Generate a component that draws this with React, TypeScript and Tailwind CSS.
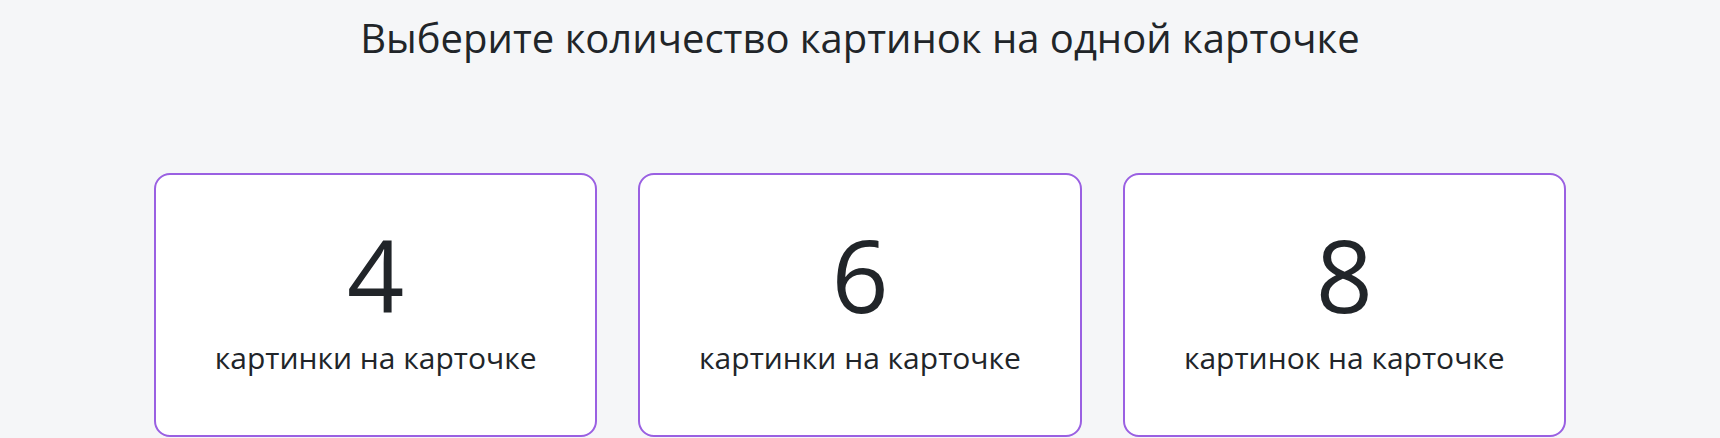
const options = [
  { count: 4, label: "картинки на карточке" },
  { count: 6, label: "картинки на карточке" },
  { count: 8, label: "картинок на карточке" },
];

export default function App() {
  return (
    <div
      className="min-h-[438px] bg-[#f5f6f8] text-[#212529]"
      style={{ fontFamily: '"Open Sans", sans-serif' }}
    >
      <h1 className="pt-[14px] text-center text-[40px] leading-[48px]">
        Выберите количество картинок на одной карточке
      </h1>

      <div className="mx-auto mt-[111px] grid w-[1412px] grid-cols-3 gap-[41px]">
        {options.map((o) => (
          <button
            key={o.count}
            className="flex h-[264px] flex-col items-center rounded-2xl border-2 border-[#9a60e2] bg-white pt-[39px]"
          >
            <span className="text-[100px] leading-[120px]">{o.count}</span>
            <span className="mt-[6px] text-[30px] leading-[36px]">{o.label}</span>
          </button>
        ))}
      </div>
    </div>
  );
}
